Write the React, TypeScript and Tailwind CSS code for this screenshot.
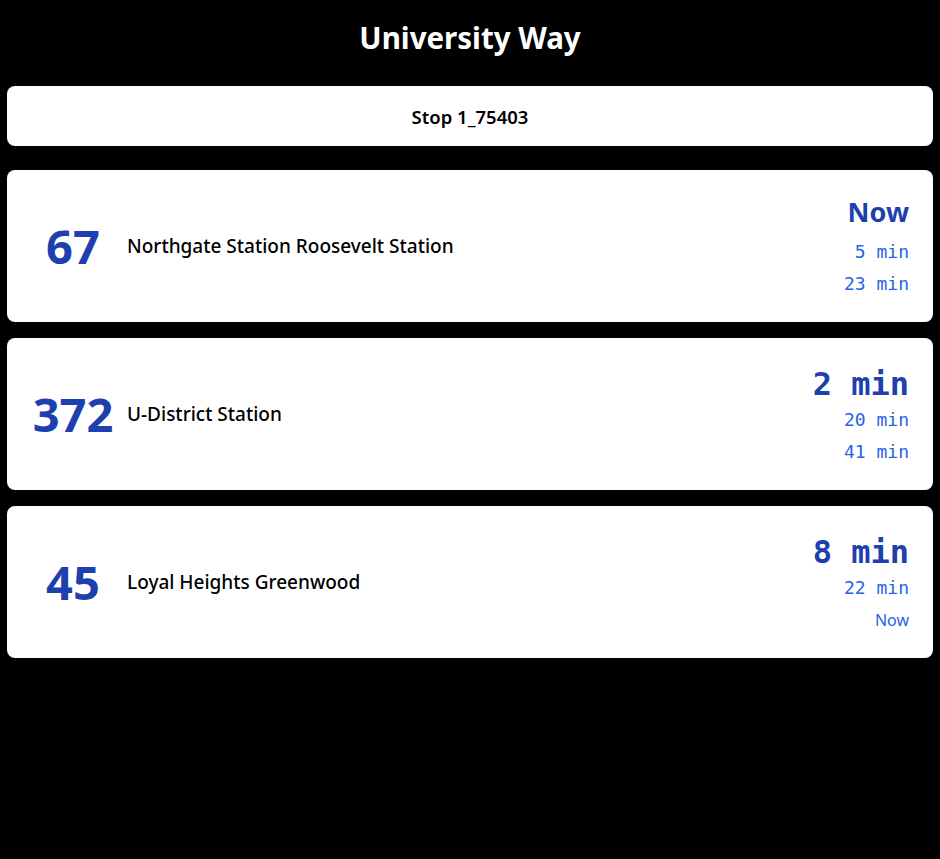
import React from "react";

type Route = { num: string; dest: string; first: string; rest: string[] };

const routes: Route[] = [
  { num: "67", dest: "Northgate Station Roosevelt Station", first: "Now", rest: ["5 min", "23 min"] },
  { num: "372", dest: "U-District Station", first: "2 min", rest: ["20 min", "41 min"] },
  { num: "45", dest: "Loyal Heights Greenwood", first: "8 min", rest: ["22 min", "Now"] },
];

const sans = "font-['Noto_Sans',sans-serif]";
const mono = "font-['DejaVu_Sans_Mono',monospace]";

export default function App() {
  return (
    <div className={`min-h-[859px] bg-black px-[7px] ${sans}`}>
      <h1 className="flex h-[76px] items-center justify-center text-[29.5px] font-bold text-white">
        University Way
      </h1>
      <div className="mt-[10px] flex h-[60px] items-center justify-center rounded-lg bg-white pt-[2px] text-[18.5px] font-semibold text-black">
        Stop 1_75403
      </div>
      <div className="mt-[24px] flex flex-col gap-4">
        {routes.map((r) => (
          <div key={r.num} className="flex h-[152px] items-center rounded-lg bg-white px-6">
            <div className="w-[84px] shrink-0 text-center text-[47px] font-bold leading-none text-[#1e40af]">
              {r.num}
            </div>
            <div className="ml-3 flex-1 text-[19px] font-medium text-black">{r.dest}</div>
            <div className="flex flex-col items-end">
              <div
                className={`h-[44px] font-bold text-[#1e40af] ${
                  r.first === "Now" ? `${sans} text-[27px] leading-[40px]` : `${mono} text-[32px] leading-[48px]`
                }`}
              >
                {r.first}
              </div>
              {r.rest.map((t, i) => (
                <div
                  key={i}
                  className={`h-[32px] leading-[32px] text-[#2563eb] ${
                    t === "Now" ? `${sans} text-[16px]` : `${mono} text-[18px]`
                  }`}
                >
                  {t}
                </div>
              ))}
            </div>
          </div>
        ))}
      </div>
    </div>
  );
}
